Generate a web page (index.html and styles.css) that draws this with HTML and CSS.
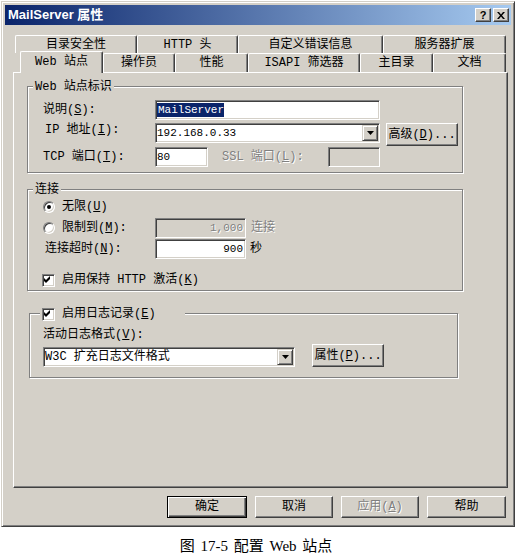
FILE: index.html
```html
<!DOCTYPE html>
<html lang="zh-CN">
<head>
<meta charset="utf-8">
<title>MailServer 属性</title>
<link rel="stylesheet" href="styles.css">
</head>
<body>
<div class="dialog">
  <div class="titlebar">
    <span class="title">MailServer 属性</span>
    <div class="tbtns">
      <span class="tbtn q">?</span>
      <span class="tbtn"><svg width="8" height="7" viewBox="0 0 8 7"><path d="M0 0h2l2 2.4L6 0h2L5 3.5 8 7H6L4 4.6 2 7H0l3-3.5z" fill="#000"/></svg></span>
    </div>
  </div>

  <div class="tabrow r1">
    <div class="tab w122">目录安全性</div>
    <div class="tab w101">HTTP 头</div>
    <div class="tab w145">自定义错误信息</div>
    <div class="tab w123">服务器扩展</div>
  </div>
  <div class="tabrow r2">
    <div class="tab active w83">Web 站点</div>
    <div class="tab w72">操作员</div>
    <div class="tab w73">性能</div>
    <div class="tab w112">ISAPI 筛选器</div>
    <div class="tab w73">主目录</div>
    <div class="tab w73">文档</div>
  </div>

  <div class="pane">
    <div class="group g1">
      <div class="gtitle">Web 站点标识</div>
      <div class="row rr1">
        <label class="lbl">说明(<u>S</u>):</label>
        <div class="field w225"><span class="sel">MailServer</span></div>
      </div>
      <div class="row rr2">
        <label class="lbl ind">IP 地址(<u>I</u>):</label>
        <div class="field combo w225"><span class="val">192.168.0.33</span><span class="dd"><svg width="7" height="4" viewBox="0 0 7 4"><path d="M0 0h7L3.5 4z" fill="#000"/></svg></span></div>
        <button class="btn b-adv">高级(<u>D</u>)...</button>
      </div>
      <div class="row rr3">
        <label class="lbl">TCP 端口(<u>T</u>):</label>
        <div class="field w53"><span class="val">80</span></div>
        <span class="dis ssl">SSL 端口(<u>L</u>):</span>
        <div class="field disabled w52"></div>
      </div>
    </div>

    <div class="group g2">
      <div class="gtitle">连接</div>
      <div class="row ra">
        <span class="radio on"></span><span>无限(<u>U</u>)</span>
      </div>
      <div class="row rb">
        <div class="lbl rlbl"><span class="radio"></span><span>限制到(<u>M</u>):</span></div>
        <div class="field disabled w91 right"><span class="val dis">1,000</span></div>
        <span class="dis unit1">连接</span>
      </div>
      <div class="row rc">
        <label class="lbl ind">连接超时(<u>N</u>):</label>
        <div class="field w91 right"><span class="val">900</span></div>
        <span class="unit2">秒</span>
      </div>
      <div class="row rd">
        <span class="check"><svg width="11" height="11" viewBox="0 0 11 11"><path d="M1 3L3 5L7 1V4L3 8L1 6Z" fill="#000"/></svg></span><span>启用保持 HTTP 激活(<u>K</u>)</span>
      </div>
    </div>

    <div class="group g3">
      <div class="gtitle gt3">
        <span class="check"><svg width="11" height="11" viewBox="0 0 11 11"><path d="M1 3L3 5L7 1V4L3 8L1 6Z" fill="#000"/></svg></span><span>启用日志记录(<u>E</u>)</span>
      </div>
      <div class="lrow">活动日志格式(<u>V</u>):</div>
      <div class="row srow">
        <div class="field combo w252"><span>W3C 扩充日志文件格式</span><span class="dd"><svg width="7" height="4" viewBox="0 0 7 4"><path d="M0 0h7L3.5 4z" fill="#000"/></svg></span></div>
        <button class="btn b-prop">属性(<u>P</u>)...</button>
      </div>
    </div>
  </div>

  <div class="buttons">
    <button class="btn default w80">确定</button>
    <button class="btn w78">取消</button>
    <button class="btn w78 dis">应用(<u>A</u>)</button>
    <button class="btn w79">帮助</button>
  </div>
</div>
<div class="caption">图 17-5 配置 Web 站点</div>
</body>
</html>
```

FILE: styles.css
```css
* { box-sizing: border-box; }
html, body { margin: 0; padding: 0; background: #fff; }
body {
  font: 12px/14px "Liberation Mono", "Noto Sans CJK SC", monospace;
  color: #000;
}
u { text-decoration: underline; text-underline-offset: 1px; }

.dialog {
  margin: 1px 0 0 1px;
  width: 514px;
  background: #d4d0c8;
  border: 1px solid;
  border-color: #d4d0c8 #404040 #404040 #d4d0c8;
  box-shadow: inset 1px 1px #fff, inset -1px -1px #808080;
  padding: 3px 3px 8px;
}

.titlebar {
  height: 20px;
  background: linear-gradient(to right, #0a246a, #a6caf0);
  display: flex;
  align-items: center;
  padding: 0 2px 0 3px;
}
.title {
  color: #fff;
  font: bold 13px/20px "Liberation Sans", "Noto Sans CJK SC", sans-serif;
}
.tbtns { margin-left: auto; display: flex; gap: 2px; }
.tbtn {
  width: 16px;
  height: 14px;
  background: #d4d0c8;
  border: 1px solid;
  border-color: #fff #404040 #404040 #fff;
  box-shadow: inset -1px -1px #808080;
  display: flex;
  align-items: center;
  justify-content: center;
}
.tbtn.q { font: bold 11px/12px "Liberation Sans", sans-serif; }

.tabrow { display: flex; }
.r1 { margin-top: 10px; padding-left: 10px; height: 18px; }
.r2 { padding-left: 15px; height: 19px; }
.tab {
  height: 100%;
  flex: none;
  background: #d4d0c8;
  border-top: 1px solid #fff;
  border-left: 1px solid #fff;
  border-right: 1px solid #404040;
  box-shadow: inset -1px 0 #808080;
  border-radius: 2px 2px 0 0;
  display: flex;
  align-items: center;
  justify-content: center;
  white-space: nowrap;
}
.tab.active {
  position: relative;
  z-index: 1;
  margin-top: -2px;
  height: 22px;
  padding-bottom: 2px;
}
.w122 { width: 122px; } .w101 { width: 101px; } .w145 { width: 145px; } .w123 { width: 123px; }
.w83 { width: 83px; } .w72 { width: 72px; } .w73 { width: 73px; } .w112 { width: 112px; }

.pane {
  margin-left: 8px;
  width: 495px;
  height: 416px;
  border: 1px solid;
  border-color: #fff #404040 #404040 #fff;
  box-shadow: inset -1px -1px #808080;
  padding: 13px 0 0 13px;
}

.group {
  border: 1px solid #808080;
  box-shadow: inset 1px 1px #fff, 1px 1px #fff;
}
.g1 { width: 436px; padding: 0 0 5px 15px; }
.g2 { width: 436px; margin-top: 16px; padding: 0 0 2px 15px; }
.g3 { width: 429px; margin: 22px 0 0 2px; padding: 0 0 10px 13px; }
.gtitle {
  display: flex;
  align-items: center;
  width: fit-content;
  height: 14px;
  margin: -7px 0 0 -10px;
  padding: 0 2px;
  background: #d4d0c8;
  white-space: nowrap;
}
.gt3 { margin-left: -3px; width: 145px; }

.row { display: flex; align-items: center; height: 20px; }
.rr1 { margin-top: 6px; }
.rr2 { margin-top: 3px; align-items: flex-start; }
.rr3 { margin-top: 4px; }
.ra { margin-top: 0; }
.rb { margin-top: 1px; }
.rc { margin-top: 1px; }
.rd { margin-top: 13px; height: 16px; margin-left: -1px; }
.lbl { width: 112px; flex: none; white-space: nowrap; }
.ind { padding-left: 2px; }
.rlbl { display: flex; align-items: center; }

.field {
  height: 20px;
  flex: none;
  background: #fff;
  border: 1px solid;
  border-color: #808080 #fff #fff #808080;
  box-shadow: inset 1px 1px #404040, inset -1px -1px #d4d0c8;
  padding: 0 1px;
  display: flex;
  align-items: center;
  white-space: nowrap;
}
.field.disabled { background: #d4d0c8; }
.field.right { justify-content: flex-end; padding-right: 2px; }
.field.combo { padding-right: 1px; }
.w225 { width: 225px; } .w53 { width: 53px; } .w52 { width: 52px; }
.w91 { width: 91px; } .w252 { width: 252px; }
.val { font: 11px/14px "Liberation Mono", monospace; }
.sel {
  font: 11px/14px "Liberation Mono", monospace;
  background: #0a246a;
  color: #fff;
  padding-left: 1px;
}
.dd {
  margin-left: auto;
  width: 16px;
  height: 16px;
  background: #d4d0c8;
  border: 1px solid;
  border-color: #d4d0c8 #404040 #404040 #d4d0c8;
  box-shadow: inset 1px 1px #fff, inset -1px -1px #808080;
  display: flex;
  align-items: center;
  justify-content: center;
}

.dis { color: #808080; text-shadow: 1px 1px #fff; }
.ssl { margin-left: 14px; width: 106px; white-space: nowrap; }
.unit1 { margin-left: 5px; }
.unit2 { margin-left: 4px; }

.radio {
  width: 12px;
  height: 12px;
  flex: none;
  border-radius: 50%;
  background: #fff;
  border: 1px solid;
  border-color: #808080 #fff #fff #808080;
  box-shadow: inset 1px 1px #404040, inset -1px -1px #d4d0c8;
  margin-right: 7px;
}
.radio.on::after {
  content: "";
  display: block;
  width: 4px;
  height: 4px;
  margin: 3px;
  border-radius: 50%;
  background: #000;
}
.check {
  width: 13px;
  height: 13px;
  flex: none;
  background: #fff;
  border: 1px solid;
  border-color: #808080 #fff #fff #808080;
  box-shadow: inset 1px 1px #404040, inset -1px -1px #d4d0c8;
  margin-right: 7px;
  display: flex;
}
.check svg { display: block; }

.lrow { margin-top: 7px; height: 14px; white-space: nowrap; }
.srow { margin-top: 2px; height: 23px; align-items: flex-end; }

.btn {
  font: inherit;
  color: #000;
  height: 22px;
  padding: 0;
  background: #d4d0c8;
  border: 1px solid;
  border-color: #fff #404040 #404040 #fff;
  box-shadow: inset -1px -1px #808080;
  display: flex;
  align-items: center;
  justify-content: center;
  white-space: nowrap;
  flex: none;
}
.btn.dis { color: #808080; text-shadow: 1px 1px #fff; }
.btn.default {
  border-color: #000;
  box-shadow: inset 1px 1px #fff, inset -1px -1px #404040, inset -2px -2px #808080;
}
.b-adv { width: 72px; height: 23px; margin-left: 6px; }
.b-prop { width: 72px; height: 23px; margin-left: 17px; }

.buttons {
  display: flex;
  justify-content: flex-end;
  gap: 8px;
  margin-top: 8px;
  padding-right: 5px;
}
.w80 { width: 80px; } .w78 { width: 78px; } .w79 { width: 79px; }

.caption {
  margin-top: 10px;
  width: 512px;
  text-align: center;
  font: 15px/18px "Liberation Serif", "Noto Sans CJK SC", serif;
  word-spacing: 2px;
}
```
